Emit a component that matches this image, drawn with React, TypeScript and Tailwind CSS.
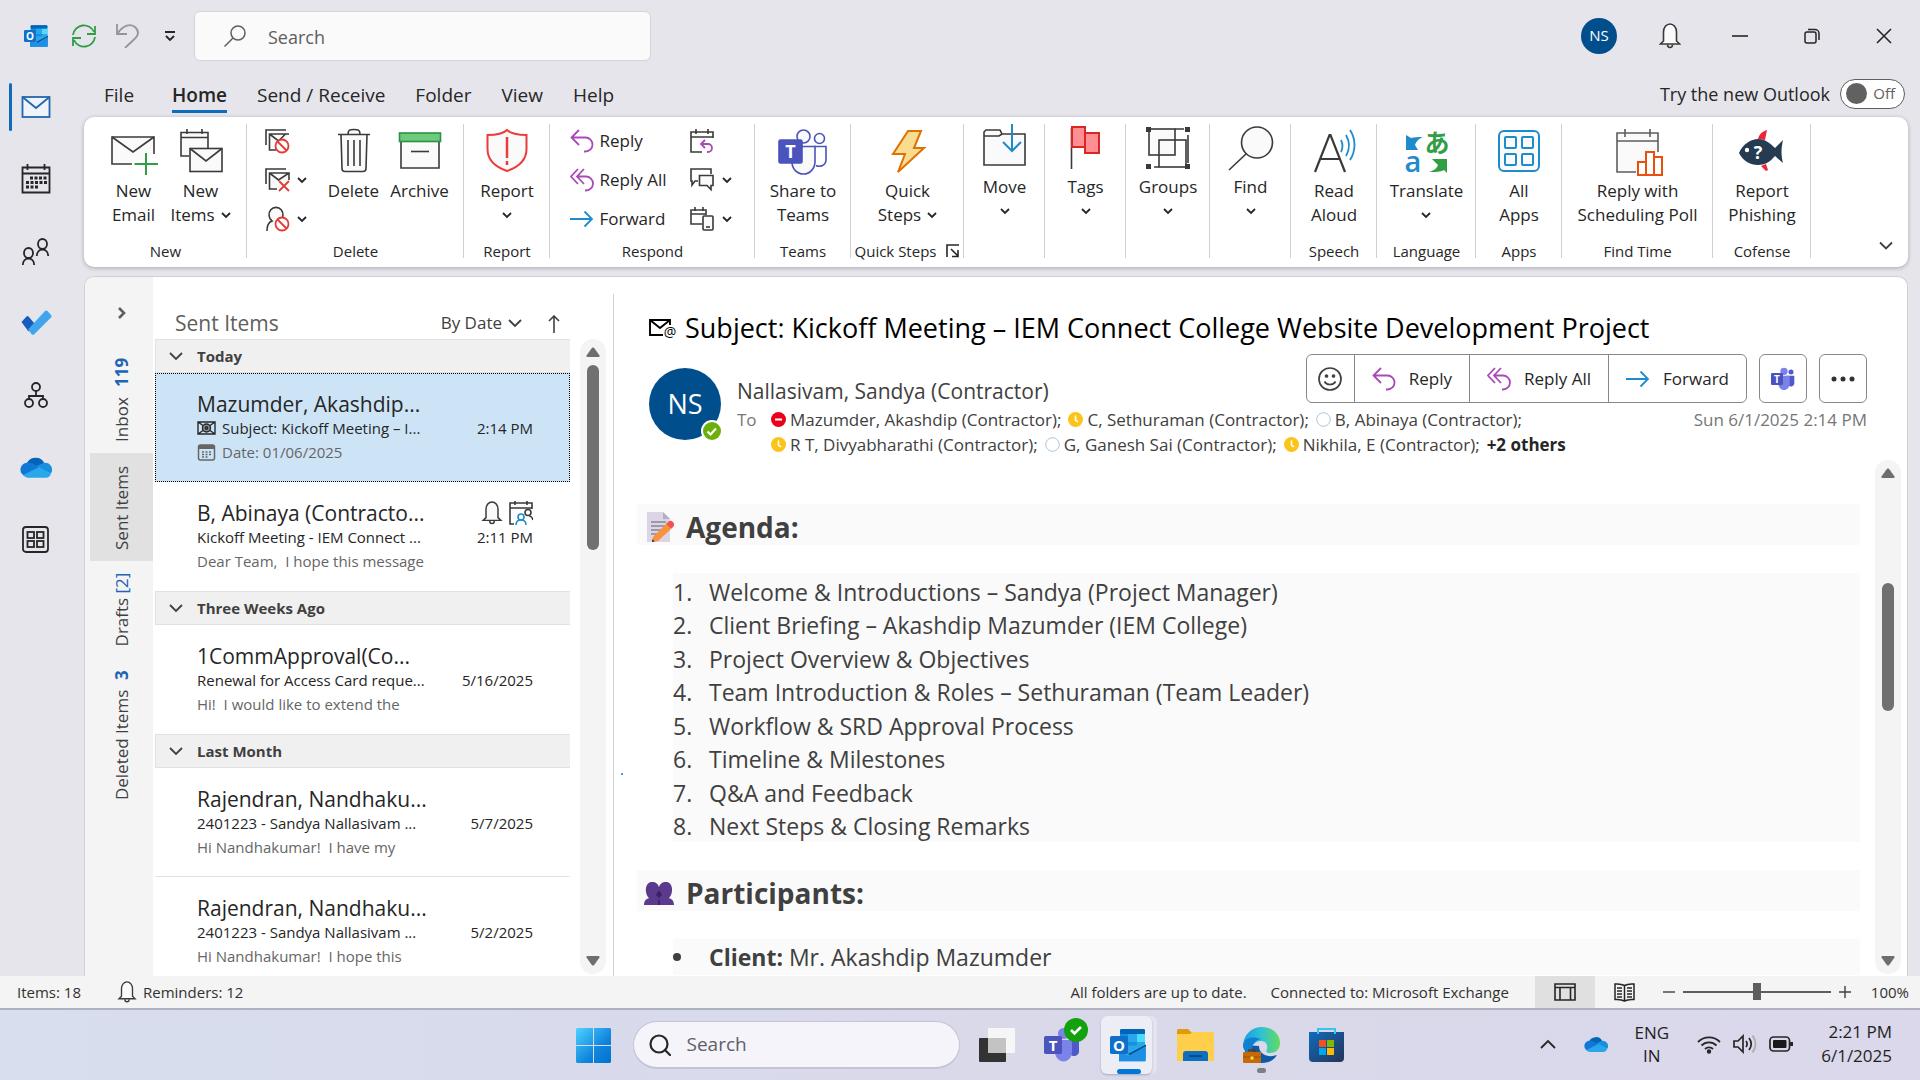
import type { ReactNode } from "react";

const INK = "#3b3a39";

/* ---------- small glyphs ---------- */

function Caret() {
  return (
    <svg className="h-2 w-2.5 shrink-0" viewBox="0 0 10 8" fill="none" stroke="#262626" strokeWidth="1.8">
      <path d="M1 2l4 4 4-4" />
    </svg>
  );
}

function Down({ className }: { className: string }) {
  return (
    <svg className={className} viewBox="0 0 14 9" fill="none" stroke="#404040" strokeWidth="1.8">
      <path d="M1 1l6 6 6-6" />
    </svg>
  );
}

function OutlookLogo({ className }: { className: string }) {
  return (
    <svg className={className} viewBox="0 0 36 34">
      <rect x="10" y="1" width="25" height="20" rx="1.5" fill="#1490df" />
      <rect x="10" y="1" width="25" height="5" rx="1.5" fill="#0364b8" />
      <rect x="18" y="6" width="9" height="8" fill="#28a8ea" />
      <rect x="27" y="6" width="8" height="8" fill="#50d9ff" />
      <rect x="27" y="14" width="8" height="7" fill="#28a8ea" />
      <path d="M9 18l27-1v15a1.500 1.500 0 0 1-1.500 1.500H9z" fill="#28a8ea" />
      <path d="M36 17L18 28l-9-6v11h26z" fill="#1f8fe6" />
      <path d="M36 16.500V18L20 27l-2-1z" fill="#0a4a8a" />
      <rect x="0" y="8" width="18" height="18" rx="1.800" fill="#0f6fcb" />
      <text x="9" y="22.500" textAnchor="middle" fontSize="15" fontWeight="700" fill="#fff">O</text>
    </svg>
  );
}

function TeamsLogo({ className }: { className: string }) {
  return (
    <svg className={className} viewBox="0 0 36 34">
      <circle cx="30" cy="6.500" r="3.800" fill="#5059c9" />
      <path d="M23 12h12v12a5 5 0 0 1-8 3z" fill="#5059c9" />
      <circle cx="19.500" cy="5.500" r="5.500" fill="#7b83eb" />
      <path d="M11 12h17v12c0 5-4 9.500-8.500 9.500S11 29 11 24z" fill="#7b83eb" />
      <rect x="0" y="8" width="18" height="18" rx="1.800" fill="#4b53bc" />
      <text x="9" y="22.500" textAnchor="middle" fontSize="15" fontWeight="700" fill="#fff">T</text>
    </svg>
  );
}

function CloudLogo({ className }: { className: string }) {
  return (
    <svg className={className} viewBox="0 0 30 20">
      <path d="M6 8a9 9 0 0 1 17-1L14 14z" fill="#0364b8" />
      <path d="M8 6a8 8 0 0 1 6 2l5 4-13 7A6.500 6.500 0 0 1 8 6z" fill="#0f78d4" />
      <path d="M15 9l8-3a6.500 6.500 0 0 1 6 10l-10-4z" fill="#1490df" />
      <path d="M3 17.500L18 10l11 6a5 5 0 0 1-4 4H7a6 6 0 0 1-4-2.500z" fill="#28a8ea" />
    </svg>
  );
}

function Bell({ className }: { className: string }) {
  return (
    <svg className={className} viewBox="0 0 22 26" fill="none" stroke={INK} strokeWidth="1.600">
      <path d="M4.500 18V9a6.500 8 0 0 1 13 0v9l3 3H1.500z" fill="#fafafa" />
      <path d="M8.500 21.500a2.500 3 0 0 0 5 0" />
    </svg>
  );
}

function ReplyIcon() {
  return (
    <svg className="h-6 w-6 shrink-0" viewBox="0 0 24 24" fill="none" stroke="#a94bb7" strokeWidth="1.800">
      <path d="M9 1L1.500 8.500 9 16M2 8.500h13.500a7 7 0 0 1 0 14H14" />
    </svg>
  );
}

function ReplyAllIcon() {
  return (
    <svg className="h-6 w-6 shrink-0" viewBox="0 0 24 24" fill="none" stroke="#a94bb7" strokeWidth="1.800">
      <path d="M8 1L1 8.500 8 16M14 1L7 8.500 14 16M8 8.500h8a7 7 0 0 1 0 14h-1" />
    </svg>
  );
}

function ForwardIcon() {
  return (
    <svg className="h-6 w-6 shrink-0" viewBox="0 0 24 24" fill="none" stroke="#1e8bcd" strokeWidth="1.800">
      <path d="M0 12h22M14.500 4.500L22 12l-7.500 7.500" />
    </svg>
  );
}

function Person({ x, y }: { x: number; y: number }) {
  return (
    <g transform={`translate(${x} ${y})`}>
      <ellipse cx="6.500" cy="6" rx="4.500" ry="5" />
      <path d="M.8 18c0-4 2.500-6.500 5.700-6.500s5.700 2.500 5.700 6.500" />
    </g>
  );
}

/* ---------- ribbon pictures ---------- */

function Pic({ children }: { children: ReactNode }) {
  return (
    <svg className="h-[46px] w-12 overflow-visible" viewBox="0 0 48 46" fill="none" stroke={INK} strokeWidth="1.600">
      {children}
    </svg>
  );
}

function MiniPic({ children }: { children: ReactNode }) {
  return (
    <svg className="h-6 w-6 shrink-0 overflow-visible" viewBox="0 0 24 24" fill="none" stroke={INK} strokeWidth="1.600">
      {children}
    </svg>
  );
}

const pics = {
  newEmail: (
    <Pic>
      <path d="M44 25V8H2v27h20" fill="#fafafa" />
      <path d="M2 8l21 15L44 8" />
      <path d="M36 24v22M24.500 35H48" stroke="#2f9e44" strokeWidth="2" />
    </Pic>
  ),
  newItems: (
    <Pic>
      <path d="M12 27H4V3.500h27V19" fill="#fafafa" />
      <path d="M4 8.500h27M10 0v5M25 0v5" />
      <rect x="13" y="19.500" width="32" height="23" fill="#fafafa" />
      <path d="M13 19.500L29 32l16-12.500" />
    </Pic>
  ),
  bin: (
    <Pic>
      <path d="M8 5.500h32M18 5.500c0-5 2-5 6-5s6 0 6 5M11 5.500l1 34a3 3 0 0 0 3 3h18a3 3 0 0 0 3-3l1-34" fill="#fafafa" />
      <path d="M18 11v26M24 11v26M30 11v26" />
    </Pic>
  ),
  archive: (
    <Pic>
      <path d="M5 12v27h38V12" fill="#fafafa" />
      <rect x="3.500" y="4" width="41" height="8.500" fill="#6ccb7c" stroke="#2f8f43" />
      <path d="M15 22.500h18" />
    </Pic>
  ),
  report: (
    <Pic>
      <path d="M24 1c4 4 10 5 19.500 5v14c0 12-8 18-19.500 22C12.500 38 4.500 32 4.500 20V6C14 6 20 5 24 1z" fill="#fafafa" stroke="#ee3a3a" strokeWidth="2" />
      <path d="M24 8v21M24 32v4" stroke="#ee3a3a" strokeWidth="2.500" />
    </Pic>
  ),
  teams: (
    <Pic>
      <g stroke="#4b53bc">
        <circle cx="24.500" cy="7.500" r="6.500" fill="#fafafa" />
        <circle cx="40.500" cy="9.500" r="5" />
        <path d="M35 17.500h12v13c0 6-6 8-10 6" />
        <path d="M13 17.500h23v15c0 7-5 12.500-11.500 12.500S13 40 13 33z" fill="#fafafa" />
        <rect x="0" y="11" width="23" height="23" rx="1.500" fill="#4b53bc" />
      </g>
      <text x="11.500" y="29" textAnchor="middle" fontSize="18" fontWeight="700" fill="#fff" stroke="none">T</text>
    </Pic>
  ),
  bolt: (
    <Pic>
      <path d="M24 2h13l-7 17h10L14 43l7-18H9z" fill="#f9dc8f" stroke="#e07000" strokeWidth="2" />
    </Pic>
  ),
  move: (
    <Pic>
      <path d="M3 40V7l2-2h14l2 4h23v31z" fill="#fafafa" />
      <path d="M3 11h15l3-2" />
      <path d="M31 -1v27M22 17l9 9 9-9" stroke="#1e8bcd" strokeWidth="2" />
    </Pic>
  ),
  tags: (
    <Pic>
      <path d="M9.500 3v41" />
      <path d="M23 8h14v20H23z" fill="#ff8f92" stroke="#dc2626" strokeWidth="2" />
      <path d="M10 2h13v20H10z" fill="#ff8f92" stroke="#dc2626" strokeWidth="2" />
    </Pic>
  ),
  groups: (
    <Pic>
      <rect x="5" y="4" width="26" height="26" fill="#fafafa" />
      <rect x="15" y="15" width="27" height="27" />
      <path d="M31 4h9M44 10v28M10 42h5" />
      <g fill={INK} stroke="none">
        <rect x="2" y="2" width="5" height="5" />
        <rect x="41" y="2" width="5" height="5" />
        <rect x="2" y="39" width="5" height="5" />
        <rect x="41" y="39" width="5" height="5" />
      </g>
    </Pic>
  ),
  find: (
    <Pic>
      <circle cx="30" cy="17.500" r="15.500" fill="#fafafa" />
      <path d="M19.500 28.500L2 45" />
    </Pic>
  ),
  readAloud: (
    <Pic>
      <path d="M5 43L19.500 6h1L35 43M10.500 30h19" strokeWidth="2.200" />
      <g stroke="#1e8bcd" strokeWidth="1.800">
        <path d="M31 11c2 4 2 8 0 12" />
        <path d="M36 6c4 7 4 14 0 21" />
        <path d="M40 1c6 9 6 21 0 30" />
      </g>
    </Pic>
  ),
  translate: (
    <Pic>
      <path d="M4 6l5 3c3-1 7-1 12-1-5 2-7 5-8 8l3 5H4z" fill="#1e8bcd" stroke="none" />
      <path d="M45 44l-3-3c-4 2-8 2-15 2 6-2 8-4 9-7l-6-6h15z" fill="#2f9e44" stroke="none" />
      <g stroke="none">
        <text x="11" y="43" textAnchor="middle" fontSize="29" fontWeight="600" fill="#1e8bcd">a</text>
        <text x="35" y="23" textAnchor="middle" fontSize="25" fontWeight="700" fill="#2f9e44" fontFamily='"Noto Sans CJK JP", sans-serif'>あ</text>
      </g>
    </Pic>
  ),
  apps: (
    <Pic>
      <g stroke="#1e8bcd" strokeWidth="2">
        <rect x="4" y="2" width="40" height="40" rx="5" fill="#fafafa" />
        <rect x="10" y="8" width="11" height="11" rx="1" />
        <rect x="27" y="8" width="11" height="11" rx="1" />
        <rect x="10" y="25" width="11" height="11" rx="1" />
        <rect x="27" y="25" width="11" height="11" rx="1" />
      </g>
    </Pic>
  ),
  poll: (
    <Pic>
      <path d="M22 43H3V4h41v19" fill="#fafafa" stroke="#605e5c" />
      <path d="M3 12h41M11 0v8M36 0v8" stroke="#605e5c" />
      <path d="M24 46V33h8v13M32 46V23h8v23M40 28h8v18H23" fill="#fff" stroke="#e8500e" strokeWidth="2" />
    </Pic>
  ),
  phish: (
    <Pic>
      <path d="M20 10c1-5 5-8 9-9l-2 10zM23 37l5 5 2-1-2-6z" fill="#ee2536" stroke="none" />
      <path d="M1 24C5 15 13 10 20 10c7 0 12 4 17 9l8-8c-2 9-2 15 0 23l-8-7c-5 6-10 9-17 9-8 0-15-4-19-12z" fill="#243b52" stroke="none" />
      <circle cx="9" cy="21" r="2.200" fill="#fff" stroke="none" />
      <text x="20" y="30" textAnchor="middle" fontSize="18" fontWeight="700" fill="#fff" stroke="none">?</text>
    </Pic>
  ),
};

const NoEntry = () => (
  <g stroke="#e53935" strokeWidth="1.800">
    <circle cx="17" cy="17" r="6.500" fill="#fff" />
    <path d="M12.500 12.500l9 9" />
  </g>
);

/* ---------- ribbon ---------- */

type GroupProps = { width: string; label?: string; launcher?: boolean; children: ReactNode };

function Group({ width, label, launcher, children }: GroupProps) {
  return (
    <section className={`relative flex h-full shrink-0 flex-col ${width}`}>
      <div className={`flex flex-1 justify-center ${label ? "pt-3" : "pt-2"}`}>{children}</div>
      {label && (
        <div className="mb-1 flex h-6 items-center justify-center gap-2.5 text-[15px] leading-6">
          {label}
          {launcher && (
            <button aria-label="Quick Steps settings">
              <svg className="h-3.5 w-3.5" viewBox="0 0 14 14" fill="none" stroke="#262626" strokeWidth="1.600">
                <path d="M1 13V1h12M5 5l7 7M12 6v6.500H6" />
              </svg>
            </button>
          )}
        </div>
      )}
      <span className="absolute right-0 top-[7px] h-[134px] w-px bg-[#d2d0ce]" />
    </section>
  );
}

function Big({ pic, lines, caret, width = "" }: { pic: ReactNode; lines: string[]; caret?: "inline" | "below"; width?: string }) {
  return (
    <button className={`flex flex-col items-center gap-1 self-start text-[17px] leading-6 whitespace-nowrap ${width}`}>
      {pic}
      <span className="flex flex-col items-center">
        {lines.map((l, i) => (
          <span key={l} className="flex items-center gap-1.5">
            {l}
            {caret === "inline" && i === lines.length - 1 && <Caret />}
          </span>
        ))}
        {caret === "below" && (
          <span className="flex h-6 items-center">
            <Caret />
          </span>
        )}
      </span>
    </button>
  );
}

function Mini({ icon, label, caret, name }: { icon: ReactNode; label?: string; caret?: boolean; name?: string }) {
  return (
    <button aria-label={name} className="flex h-[39px] items-center gap-1.5 text-[17px] leading-6 whitespace-nowrap">
      {icon}
      {label}
      {caret && <span className="ml-0.5"><Caret /></span>}
    </button>
  );
}

function Ribbon() {
  return (
    <div className="mr-3 flex h-[150px] items-stretch rounded-[10px] bg-white text-[#262626] shadow-[0_1px_4px_rgba(0,0,0,0.28)]">
      <Group width="w-[163px]" label="New">
        <div className="ml-1 flex">
          <Big pic={pics.newEmail} lines={["New", "Email"]} width="w-[66px]" />
          <Big pic={pics.newItems} lines={["New", "Items"]} caret="inline" width="w-[68px]" />
        </div>
      </Group>
      <Group width="w-[217px]" label="Delete">
        <div className="-mt-2 ml-1.5 flex w-[56px] flex-col">
          <Mini name="Ignore" icon={<MiniPic><path d="M1 16V1h20" /><path d="M11 21H4.500V5H24M4.500 5l9 7 7-7" fill="#fafafa" /><NoEntry /></MiniPic>} />
          <Mini name="Clean Up" caret icon={<MiniPic><path d="M1 16V1h20" /><path d="M12 21H4.500V5H24v7M4.500 5l9 7L24 5" fill="#fafafa" /><path d="M14 13l10 10M24 13L14 23" stroke="#e53935" strokeWidth="1.800" /></MiniPic>} />
          <Mini name="Junk" caret icon={<MiniPic><path d="M2 24c0-6 2-9 5-10a7 7.500 0 1 1 8 0" fill="#fafafa" /><NoEntry /></MiniPic>} />
        </div>
        <Big pic={pics.bin} lines={["Delete"]} width="w-[66px]" />
        <Big pic={pics.archive} lines={["Archive"]} width="w-[66px]" />
      </Group>
      <Group width="w-[86px]" label="Report">
        <Big pic={pics.report} lines={["Report"]} caret="below" />
      </Group>
      <Group width="w-[205px]" label="Respond">
        <div className="-mt-2 flex w-[120px] flex-col">
          <Mini icon={<ReplyIcon />} label="Reply" />
          <Mini icon={<ReplyAllIcon />} label="Reply All" />
          <Mini icon={<ForwardIcon />} label="Forward" />
        </div>
        <div className="-mt-2 mr-1 flex flex-col">
          <Mini name="Meeting" icon={<MiniPic><path d="M12 23H1V3h22v6M1 8h22M6 0v5M18 0v5" /><path d="M15 11l-4 4 4 4M11 15h7a4 4 0 0 1 0 8h-1" stroke="#a94bb7" strokeWidth="1.800" /></MiniPic>} />
          <Mini name="Chat" caret icon={<MiniPic><path d="M8 13H5l-3 4v-4H1V1h20v5" /><path d="M9.500 7.500H23v10h-2v4l-4-4H9.500z" fill="#fafafa" /></MiniPic>} />
          <Mini name="More" caret icon={<MiniPic><path d="M12 17H1V3h15v5M1 7h15M5 0v4M13 0v4" /><rect x="13" y="9" width="10" height="14" rx="1" fill="#fafafa" /><path d="M16 20h4" /></MiniPic>} />
        </div>
      </Group>
      <Group width="w-24" label="Teams">
        <Big pic={pics.teams} lines={["Share to", "Teams"]} />
      </Group>
      <Group width="w-[113px]" label="Quick Steps" launcher>
        <Big pic={pics.bolt} lines={["Quick", "Steps"]} caret="inline" />
      </Group>
      <Group width="w-[81px]"><Big pic={pics.move} lines={["Move"]} caret="below" /></Group>
      <Group width="w-[81px]"><Big pic={pics.tags} lines={["Tags"]} caret="below" /></Group>
      <Group width="w-[84px]"><Big pic={pics.groups} lines={["Groups"]} caret="below" /></Group>
      <Group width="w-[81px]"><Big pic={pics.find} lines={["Find"]} caret="below" /></Group>
      <Group width="w-[86px]" label="Speech"><Big pic={pics.readAloud} lines={["Read", "Aloud"]} /></Group>
      <Group width="w-[99px]" label="Language"><Big pic={pics.translate} lines={["Translate"]} caret="below" /></Group>
      <Group width="w-[86px]" label="Apps"><Big pic={pics.apps} lines={["All", "Apps"]} /></Group>
      <Group width="w-[151px]" label="Find Time"><Big pic={pics.poll} lines={["Reply with", "Scheduling Poll"]} /></Group>
      <Group width="w-[98px]" label="Cofense"><Big pic={pics.phish} lines={["Report", "Phishing"]} /></Group>
      <button aria-label="Ribbon display options" className="mb-4 ml-auto mr-[15px] self-end">
        <Down className="h-2.5 w-3.5" />
      </button>
    </div>
  );
}

/* ---------- window chrome ---------- */

function TitleBar() {
  return (
    <header className="flex h-[71px] shrink-0 items-center pl-6">
      <OutlookLogo className="h-6 w-6" />
      <button aria-label="Send and receive all" className="ml-6">
        <svg className="h-6 w-6" viewBox="0 0 24 24" fill="none" stroke="#2f9e44" strokeWidth="1.800">
          <path d="M1 11a11 11 0 0 1 21-3M23 2v8h-8M23 13a11 11 0 0 1-21 3M1 22v-8h8" />
        </svg>
      </button>
      <button aria-label="Undo" className="ml-5">
        <svg className="h-6 w-6" viewBox="0 0 24 24" fill="none" stroke="#949499" strokeWidth="1.800">
          <path d="M1 0v10h10M1.500 9.500C7 1 15-1 19.500 3.500s2 9-1 11.500L9 24" />
        </svg>
      </button>
      <button aria-label="Customize quick access toolbar" className="ml-6">
        <svg className="h-3 w-3" viewBox="0 0 12 12" fill="none" stroke="#262626" strokeWidth="1.800">
          <path d="M1 2h10M2 6l4 4 4-4" />
        </svg>
      </button>
      <label className="ml-[18px] flex h-[50px] w-[457px] items-center gap-[22px] rounded-md border border-[#d4d4d8] bg-[#fafafa] pl-[29px]">
        <svg className="h-[22px] w-[22px] shrink-0" viewBox="0 0 22 22" fill="none" stroke="#605e5c" strokeWidth="1.500">
          <circle cx="14" cy="8" r="7" />
          <path d="M9 13l-8.500 8.500" />
        </svg>
        <input aria-label="Search" placeholder="Search" className="w-full bg-transparent pt-0.5 text-lg outline-none placeholder:text-[#605e5c]" />
      </label>
      <div className="ml-auto flex items-center">
        <button aria-label="Account" className="mr-[42px] flex h-9 w-9 items-center justify-center rounded-full bg-[#004e8c] text-[15px] text-white">NS</button>
        <button aria-label="Notifications" className="mr-[23px]"><Bell className="h-[26px] w-[22px]" /></button>
        <button aria-label="Minimize" className="flex w-[72px] justify-center">
          <svg className="h-4 w-4" viewBox="0 0 16 16" stroke="#262626" strokeWidth="1.600"><path d="M0 8h16" /></svg>
        </button>
        <button aria-label="Restore" className="flex w-[72px] justify-center">
          <svg className="h-4 w-4" viewBox="0 0 16 16" fill="none" stroke="#262626" strokeWidth="1.500">
            <rect x="1" y="4" width="11" height="11" rx="2" />
            <path d="M4 1.500h7a4 4 0 0 1 4 4V12" />
          </svg>
        </button>
        <button aria-label="Close" className="flex w-[72px] justify-center">
          <svg className="h-4 w-4" viewBox="0 0 16 16" stroke="#262626" strokeWidth="1.600"><path d="M1 1l14 14M15 1L1 15" /></svg>
        </button>
      </div>
    </header>
  );
}

function AppRail() {
  const svg = (children: ReactNode, stroke = "#262626") => (
    <svg className="h-8 w-[30px]" viewBox="0 0 30 32" fill="none" stroke={stroke} strokeWidth="1.800">{children}</svg>
  );
  const entries: [string, ReactNode][] = [
    ["Mail", svg(<><rect x="1.500" y="6" width="27" height="20" fill="#f0f4fa" /><path d="M1.500 6L15 17 28.500 6" /></>, "#2166ae")],
    ["Calendar", svg(<>
      <path d="M1.500 4.500h27v25h-27zM1.500 10.500h27M6.500 1v6M23.500 1v6" />
      <path d="M9 15h17M5 19.500h21M5 24h12" strokeWidth="3" strokeDasharray="3 1.500" />
    </>)],
    ["People", svg(<><Person x={1} y={12} /><Person x={15} y={3} /></>)],
    ["To Do", <svg className="h-7 w-8" viewBox="0 0 32 28">
      <path d="M1.500 13l5-5.500a1.500 1.500 0 0 1 2 0l6 7-6 8z" fill="#185abd" />
      <path d="M8 20.500L25 2a1.800 1.800 0 0 1 2.500 0l3.500 4a1.800 1.800 0 0 1 0 2.500L14.500 25a2 2 0 0 1-3 0z" fill="#41a5ee" />
    </svg>],
    ["Org Explorer", svg(<><circle cx="15" cy="8" r="4" /><circle cx="8" cy="24" r="4" /><circle cx="22" cy="24" r="4" /><path d="M15 12v4M8 20v-3h14v3" /></>)],
    ["OneDrive", <CloudLogo className="h-6 w-8" />],
    ["More apps", svg(<>
      <rect x="2" y="4" width="25" height="25" rx="3" />
      <rect x="6.500" y="9" width="6.500" height="6" /><rect x="16" y="9" width="6.500" height="6" />
      <rect x="6.500" y="18" width="6.500" height="6" /><rect x="16" y="18" width="6.500" height="6" />
    </>)],
  ];
  return (
    <nav className="flex w-[84px] shrink-0 flex-col">
      {entries.map(([name, icon], i) => (
        <button key={name} aria-label={name} className="flex h-[72px] w-full shrink-0 items-center pl-[9px]">
          <span className={`h-12 w-[3px] rounded ${i === 0 ? "bg-[#0f6cbd]" : "bg-transparent"}`} />
          <span className="ml-2 flex w-8 justify-center">{icon}</span>
        </button>
      ))}
    </nav>
  );
}

function Tabs() {
  const tabs = ["Home", "Send / Receive", "Folder", "View", "Help"];
  return (
    <div className="flex h-[46px] shrink-0 items-center pl-5 pr-[15px] pt-[5px] text-[19px] text-[#262626]">
      <button className="border-b-[3px] border-transparent leading-[30px]">File</button>
      <div className="ml-[38px] flex gap-[30px]">
        {tabs.map((t) => (
          <button key={t} className={`border-b-[3px] leading-[30px] ${t === "Home" ? "border-[#0f6cbd] font-semibold" : "border-transparent"}`}>{t}</button>
        ))}
      </div>
      <label className="relative -mt-1.5 ml-auto flex items-center gap-2.5 text-lg">
        Try the new Outlook
        <input type="checkbox" role="switch" className="h-[30px] w-[65px] appearance-none rounded-full border border-[#605e5c] bg-white" />
        <span className="pointer-events-none absolute right-[38px] h-[21px] w-[21px] rounded-full bg-[#616161]" />
        <span className="pointer-events-none absolute right-2.5 text-[15px] text-[#616161]">Off</span>
      </label>
    </div>
  );
}

/* ---------- folder strip and message list ---------- */

function FolderStrip() {
  const folders = [
    { name: "Inbox", count: "119", bold: true, h: "h-[108px]" },
    { name: "Sent Items", h: "h-[108px] bg-[#e1e1e1]" },
    { name: "Drafts", count: "[2]", h: "h-24" },
    { name: "Deleted Items", count: "3", bold: true, h: "h-[154px]" },
  ];
  return (
    <nav className="flex w-[68px] shrink-0 flex-col bg-[#f4f4f4] pl-[5px]">
      <button aria-label="Expand folder pane" className="flex h-[68px] items-end justify-center pb-[26px]">
        <svg className="h-3 w-2.5" viewBox="0 0 10 12" fill="none" stroke="#605e5c" strokeWidth="2.600"><path d="M2 1l5 5-5 5" /></svg>
      </button>
      {folders.map((f) => (
        <button key={f.name} className={`flex w-full items-center justify-center pt-0.5 ${f.h}`}>
          <span className={`flex rotate-180 text-[17px] leading-6 whitespace-nowrap text-[#404040] [writing-mode:vertical-rl] ${f.bold ? "gap-2.5" : "gap-1"}`}>
            {f.name}
            {f.count && <span className={f.bold ? "font-bold text-[#2065b5]" : "text-[#2065b5]"}>{f.count}</span>}
          </span>
        </button>
      ))}
    </nav>
  );
}

type Msg = { from: string; subject: string; preview: string; when: string; selected?: boolean; meeting?: boolean; rule?: boolean };

const sections: { title: string; messages: Msg[] }[] = [
  {
    title: "Today",
    messages: [
      { from: "Mazumder, Akashdip...", subject: "Subject: Kickoff Meeting – I...", preview: "Date: 01/06/2025", when: "2:14 PM", selected: true },
      { from: "B, Abinaya (Contracto...", subject: "Kickoff Meeting - IEM Connect ...", preview: "Dear Team,  I hope this message", when: "2:11 PM", meeting: true },
    ],
  },
  {
    title: "Three Weeks Ago",
    messages: [{ from: "1CommApproval(Co...", subject: "Renewal for Access Card reque...", preview: "Hi!  I would like to extend the", when: "5/16/2025" }],
  },
  {
    title: "Last Month",
    messages: [
      { from: "Rajendran, Nandhaku...", subject: "2401223 - Sandya Nallasivam ...", preview: "Hi Nandhakumar!  I have my", when: "5/7/2025", rule: true },
      { from: "Rajendran, Nandhaku...", subject: "2401223 - Sandya Nallasivam ...", preview: "Hi Nandhakumar!  I hope this", when: "5/2/2025" },
    ],
  },
];

function Message({ m }: { m: Msg }) {
  return (
    <li
      className={`flex h-[109px] shrink-0 flex-col border pl-[41px] pr-9 pt-[18px] text-[15px] leading-6 whitespace-pre text-[#262626] ${
        m.selected ? "border-dotted border-black bg-[#cde4f7]" : m.rule ? "border-transparent border-b-[#e1e1e1]" : "border-transparent"
      }`}
    >
      <div className="flex items-center justify-between text-[21px]">
        {m.from}
        {m.meeting && (
          <span className="flex gap-1.5">
            <Bell className="h-6 w-[22px]" />
            <svg className="h-6 w-6" viewBox="0 0 24 24" fill="none" stroke={INK} strokeWidth="1.600">
              <path d="M5 23H1V2h22v6M1 7h22M6 0v4M18 0v4" />
              <circle cx="19" cy="11.500" r="3" /><path d="M20 15c2 0 3.500 2 4 4" />
              <circle cx="12" cy="16" r="3" stroke="#1e8bcd" /><path d="M7 24c0-3 2-5 5-5s5 2 5 5" stroke="#1e8bcd" />
            </svg>
          </span>
        )}
      </div>
      <div className="flex items-center justify-between">
        <span className="flex items-center gap-1.5">
          {m.selected && (
            <svg className="h-4 w-[19px]" viewBox="0 0 19 16" fill="none" stroke="#262626" strokeWidth="1.400">
              <path d="M1 2h17v12H1zM1 2l17 12M18 2L1 14" />
              <circle cx="9.500" cy="8" r="4" fill="#8a9299" /><circle cx="9.500" cy="8" r="1.200" />
            </svg>
          )}
          {m.subject}
        </span>
        {m.when}
      </div>
      <div className="flex items-center gap-1.5 text-[#666666]">
        {m.selected && (
          <svg className="h-[17px] w-[19px]" viewBox="0 0 19 17" fill="none" stroke="#666" strokeWidth="1.500">
            <rect x="1.500" y="1" width="16" height="15" rx="2" />
            <path d="M1.500 3h16" strokeWidth="4" />
            <path d="M5 8h9M5 10.500h9M5 13h6" strokeDasharray="2 1.500" />
          </svg>
        )}
        {m.preview}
      </div>
    </li>
  );
}

function Scrollbar({ thumb }: { thumb: string }) {
  return (
    <div className="flex w-[26px] shrink-0 flex-col items-center rounded-full bg-[#f4f4f4] py-2">
      <svg className="h-2.5 w-3.5" viewBox="0 0 14 10"><path d="M6 .8L.5 8.500Q0 10 1.500 10h11Q14 10 13.500 8.500L8 .8Q7 0 6 .8z" fill="#6e6e6e" /></svg>
      <div className={`w-3 rounded-full bg-[#707070] ${thumb}`} />
      <svg className="mt-auto h-2.5 w-3.5" viewBox="0 0 14 10"><path d="M6 9.200L.5 1.500Q0 0 1.500 0h11Q14 0 13.500 1.500L8 9.200Q7 10 6 9.200z" fill="#6e6e6e" /></svg>
    </div>
  );
}

function MessageList() {
  return (
    <section className="mt-[17px] flex w-[461px] shrink-0 flex-col border-r border-[#d2d0ce]">
      <div className="flex h-[45px] shrink-0 items-end pb-0.5 pl-[22px] pr-[53px] text-[#404040]">
        <h2 className="text-[21px] leading-7 text-[#605e5c]">Sent Items</h2>
        <button className="ml-auto flex items-center gap-1.5 text-[17px] leading-7">By Date <Down className="h-[9px] w-3.5" /></button>
        <button aria-label="Sort order" className="ml-[26px] pb-1">
          <svg className="h-[18px] w-3" viewBox="0 0 12 18" fill="none" stroke="#404040" strokeWidth="1.600"><path d="M6 18V1M1 6l5-5 5 5" /></svg>
        </button>
      </div>
      <div className="flex min-h-0 flex-1">
        <div className="ml-0.5 mr-2.5 flex min-w-0 flex-1 flex-col overflow-hidden">
          {sections.map((s) => (
            <div key={s.title} className="flex shrink-0 flex-col">
              <button className="flex h-[34px] items-center gap-3.5 border-y border-l border-[#e1e1e1] bg-[#f0f0f0] pl-[13px] text-[15px] font-bold text-[#404040]">
                <Down className="h-[9px] w-3.5" />
                {s.title}
              </button>
              <ul className="flex flex-col">{s.messages.map((m, i) => <Message key={i} m={m} />)}</ul>
            </div>
          ))}
        </div>
        <div className="mb-0.5 mr-[7px] flex"><Scrollbar thumb="mt-2 h-[185px]" /></div>
      </div>
    </section>
  );
}

/* ---------- reading pane ---------- */

type Status = "busy" | "away" | "unknown";

function Presence({ s }: { s: Status }) {
  return (
    <svg className="h-[15px] w-[15px] shrink-0" viewBox="0 0 15 15" fill="none">
      {s === "busy" && <><circle cx="7.500" cy="7.500" r="7.500" fill="#e8001c" /><path d="M4 7.500h7" stroke="#fff" strokeWidth="1.800" /></>}
      {s === "away" && <><circle cx="7.500" cy="7.500" r="7.500" fill="#fcc419" /><path d="M7.500 3.500V8l2.500 2" stroke="#fff" strokeWidth="1.600" /></>}
      {s === "unknown" && <circle cx="7.500" cy="7.500" r="6.800" fill="#fff" stroke="#a9c7dc" />}
    </svg>
  );
}

function Recipient({ s, name }: { s: Status; name: string }) {
  return <span className="flex items-center gap-1"><Presence s={s} />{name};</span>;
}

function MailActions() {
  return (
    <div className="flex gap-3 text-[17px] text-[#262626]">
      <div className="flex h-[49px] divide-x divide-[#8a8886] rounded-md border border-[#8a8886]">
        <button aria-label="React" className="flex w-12 items-center justify-center">
          <svg className="h-6 w-6" viewBox="0 0 24 24" fill="none" stroke="#404040" strokeWidth="1.700">
            <circle cx="12" cy="12" r="11" /><path d="M6.500 14.500c2 4 9 4 11 0" />
            <circle cx="8.500" cy="9" r="1" fill="#404040" /><circle cx="15.500" cy="9" r="1" fill="#404040" />
          </svg>
        </button>
        <button className="flex items-center gap-[13px] px-[17px]"><ReplyIcon />Reply</button>
        <button className="flex items-center gap-[13px] px-[17px]"><ReplyAllIcon />Reply All</button>
        <button className="flex items-center gap-[13px] px-[17px]"><ForwardIcon />Forward</button>
      </div>
      <button aria-label="Share to Teams" className="flex w-12 items-center justify-center rounded-md border border-[#8a8886]"><TeamsLogo className="h-6 w-6" /></button>
      <button aria-label="More actions" className="flex w-12 items-center justify-center rounded-md border border-[#8a8886]">
        <svg className="h-1.5 w-6" viewBox="0 0 24 6" fill="#323130"><circle cx="3" cy="3" r="2.500" /><circle cx="12" cy="3" r="2.500" /><circle cx="21" cy="3" r="2.500" /></svg>
      </button>
    </div>
  );
}

function ReadingPane() {
  const agenda = [
    "Welcome & Introductions – Sandya (Project Manager)",
    "Client Briefing – Akashdip Mazumder (IEM College)",
    "Project Overview & Objectives",
    "Team Introduction & Roles – Sethuraman (Team Leader)",
    "Workflow & SRD Approval Process",
    "Timeline & Milestones",
    "Q&A and Feedback",
    "Next Steps & Closing Remarks",
  ];
  return (
    <article className="relative flex min-w-0 flex-1 flex-col">
      <span className="absolute left-[7px] top-[496px] h-0.5 w-0.5 bg-[#4aa3e0]" />
      <div className="flex items-start gap-4 pb-[3px] pl-[35px] pr-10 pt-[31px]">
        <div className="min-w-0 flex-1">
          <h1 className="flex h-10 items-center gap-2 text-[27px] text-black whitespace-nowrap">
            <svg className="h-6 w-7 overflow-visible" viewBox="0 0 28 24" fill="none" stroke="#000" strokeWidth="1.900">
              <path d="M21 9V4H1v15h13M1 4l10 8 10-8" />
              <text x="21" y="21" textAnchor="middle" fontSize="14" fill="#000" stroke="none">@</text>
            </svg>
            Subject: Kickoff Meeting – IEM Connect College Website Development Project
          </h1>
          <div className="flex">
            <div className="relative mt-5 flex h-[72px] w-[72px] shrink-0 items-center justify-center rounded-full bg-[#004e8c] text-[27px] text-white">
              NS
              <svg className="absolute -bottom-0.5 -right-0.5 h-[22px] w-[22px]" viewBox="0 0 22 22" fill="none">
                <circle cx="11" cy="11" r="11" fill="#fff" /><circle cx="11" cy="11" r="9" fill="#6bb00a" />
                <path d="M6.500 11.500l3 3 5.500-6" stroke="#fff" strokeWidth="2.200" />
              </svg>
            </div>
            <div className="ml-4 min-w-0 flex-1 text-[#404040]">
              <div className="mt-1.5 flex h-[53px] items-end justify-between">
                <span className="h-8 text-[21px] leading-8">Nallasivam, Sandya (Contractor)</span>
                <span className="-mb-0.5 self-start"><MailActions /></span>
              </div>
              <div className="flex text-[17px] leading-[25px] whitespace-nowrap">
                <span className="w-[34px] text-[#767676]">To</span>
                <div>
                  <div className="flex gap-[7px]">
                    <Recipient s="busy" name="Mazumder, Akashdip (Contractor)" />
                    <Recipient s="away" name="C, Sethuraman (Contractor)" />
                    <Recipient s="unknown" name="B, Abinaya (Contractor)" />
                  </div>
                  <div className="flex gap-[7px]">
                    <Recipient s="away" name="R T, Divyabharathi (Contractor)" />
                    <Recipient s="unknown" name="G, Ganesh Sai (Contractor)" />
                    <Recipient s="away" name="Nikhila, E (Contractor)" />
                    <b className="text-[#262626]">+2 others</b>
                  </div>
                </div>
                <time className="ml-auto text-[#767676]">Sun 6/1/2025 2:14 PM</time>
              </div>
            </div>
          </div>
        </div>
      </div>
      <div className="flex min-h-0 flex-1">
        <div className="min-w-0 flex-1 overflow-hidden pl-[23px] pr-[15px] pt-11 text-[23px] text-[#404040]">
          <h2 className="flex h-[41px] items-center gap-3 bg-[#fafafa] pl-[9px] pt-1 text-[28px] font-bold">
            <svg className="h-8 w-7" viewBox="0 0 28 32">
              <path d="M1 1h16l7 7v23H1z" fill="#dcd5e6" /><path d="M17 1l7 7h-7z" fill="#b5aebf" />
              <path d="M5 11h15M5 15h15M5 19h13M5 23h10" stroke="#8b8594" strokeWidth="1.400" />
              <path d="M7 26L20 13l5 5-13 12-6 1z" fill="#f8923c" /><path d="M20 13l2-2a3 3 0 0 1 5 5l-2 2z" fill="#f1544d" />
              <path d="M6 31l.5-3 2 2.500z" fill="#3f2a33" />
            </svg>
            Agenda:
          </h2>
          <ol className="ml-9 mt-7 grid h-[269px] content-between bg-[#fafafa] pt-[3px] leading-8">
            {agenda.map((t, i) => (
              <li key={t} className="flex"><span className="w-9">{i + 1}.</span>{t}</li>
            ))}
          </ol>
          <h2 className="mt-7 flex h-[41px] items-center gap-3 bg-[#fafafa] pl-[7px] pt-1 text-[28px] font-bold">
            <svg className="h-6 w-[30px]" viewBox="0 0 30 24" fill="#5b3a8e">
              <path d="M0 24c0-5 3-6 5-7-5-5-4-16 3-16 4 0 6 2 7 5 1-3 3-5 7-5 7 0 8 11 3 16 2 1 5 2 5 7z" />
              <path d="M12 14l3 3 3-3-2-4h-2zM14 24c0-3 0-5 1-6 1 1 1 3 1 6z" fill="#3c2166" />
            </svg>
            Participants:
          </h2>
          <ul className="ml-9 mt-7 bg-[#fafafa] leading-9">
            <li className="flex items-center whitespace-pre"><span className="w-9"><span className="block h-2 w-2 rounded-full bg-[#404040]" /></span><b>Client:</b> Mr. Akashdip Mazumder</li>
          </ul>
        </div>
        <div className="mb-0.5 mr-1.5 flex"><Scrollbar thumb="mt-[105px] h-[128px]" /></div>
      </div>
    </article>
  );
}

/* ---------- bottom bars ---------- */

function StatusBar() {
  return (
    <footer className="flex h-[34px] shrink-0 items-center border-b-2 border-[#aeb2bf] bg-[#f4f4f4] pl-[17px] pr-[11px] text-[15px] text-[#323130] whitespace-nowrap">
      <span>Items: 18</span>
      <button className="ml-9 flex items-center gap-1.5"><Bell className="h-[22px] w-5" />Reminders: 12</button>
      <span className="ml-auto">All folders are up to date.</span>
      <span className="ml-6">Connected to: Microsoft Exchange</span>
      <button aria-label="Normal view" className="ml-[26px] flex h-8 w-[60px] items-center justify-center bg-[#e0e0e0]">
        <svg className="h-[18px] w-[22px]" viewBox="0 0 22 18" fill="none" stroke="#262626" strokeWidth="1.600"><path d="M1 1h20v16H1zM1 4.500h20M6 4.500V17M16.500 4.500V17" /></svg>
      </button>
      <button aria-label="Reading view" className="ml-[19px]">
        <svg className="h-[19px] w-[21px]" viewBox="0 0 21 19" fill="none" stroke="#262626" strokeWidth="1.500">
          <path d="M10.500 2.500Q7 .5 1 1v15.500q6-.5 9.500 1.500 3.500-2 9.500-1.500V1q-6-.5-9.500 1.500zM10.500 2.500V18M3 5h5M3 8h5M3 11h5M3 14h5M13 5h5M13 8h5M13 11h5M13 14h5" />
        </svg>
      </button>
      <button aria-label="Zoom out" className="ml-7"><svg className="h-3 w-3" viewBox="0 0 12 12" stroke="#404040" strokeWidth="1.400"><path d="M0 6h12" /></svg></button>
      <input
        type="range"
        aria-label="Zoom"
        defaultValue={50}
        className="ml-2 h-5 w-[148px] appearance-none bg-transparent [&::-webkit-slider-runnable-track]:h-0.5 [&::-webkit-slider-runnable-track]:bg-[#605e5c] [&::-webkit-slider-thumb]:-mt-2 [&::-webkit-slider-thumb]:h-[17px] [&::-webkit-slider-thumb]:w-2 [&::-webkit-slider-thumb]:appearance-none [&::-webkit-slider-thumb]:bg-[#605e5c]"
      />
      <button aria-label="Zoom in" className="ml-2"><svg className="h-3 w-3" viewBox="0 0 12 12" stroke="#404040" strokeWidth="1.400"><path d="M0 6h12M6 0v12" /></svg></button>
      <span className="ml-5">100%</span>
    </footer>
  );
}

function Taskbar() {
  return (
    <div className="grid h-[70px] shrink-0 grid-cols-[1fr_auto_1fr] items-center bg-linear-to-r from-[#d7deee] via-[#d9d9ea] via-45% to-[#dad8ea] text-[17px] text-[#1f1f1f]">
      <span />
      <div className="flex items-center">
        <button aria-label="Start" className="mr-[22px]">
          <svg className="h-[35px] w-[35px]" viewBox="0 0 35 35">
            <defs><linearGradient id="win" x1="0" y1="0" x2="1" y2="1"><stop offset="0" stopColor="#4fd3ff" /><stop offset=".6" stopColor="#1186dd" /><stop offset="1" stopColor="#0072ce" /></linearGradient></defs>
            <path d="M1 0h16v17H0V1zM18 0h16l1 1v16H18zM0 18h17v17H1l-1-1zM18 18h17v16l-1 1H18z" fill="url(#win)" />
          </svg>
        </button>
        <label className="flex h-12 w-[327px] items-center gap-4 rounded-full border border-b-2 border-[#c4c4d6] bg-[#f4f4fa] pl-[15px]">
          <svg className="h-[22px] w-[22px] shrink-0" viewBox="0 0 22 22" fill="none" stroke="#262626" strokeWidth="2.200" strokeLinecap="round"><circle cx="10" cy="10" r="8.500" /><path d="M16 16l5 5" /></svg>
          <input aria-label="Taskbar search" placeholder="Search" className="w-full bg-transparent text-[19px] outline-none placeholder:text-[#5f5f66]" />
        </label>
        <button aria-label="Task view" className="ml-[18px]">
          <svg className="h-[34px] w-[38px]" viewBox="0 0 38 34">
            <rect x="1" y="10" width="27" height="24" rx="1" fill="#333" />
            <rect x="10" y="0" width="27" height="25" rx="1" fill="#f6f6f6" />
            <rect x="10" y="10" width="18" height="15" fill="#c3c3c3" />
          </svg>
        </button>
        <button aria-label="Teams" className="relative ml-7">
          <TeamsLogo className="h-[34px] w-9" />
          <svg className="absolute -right-2 -top-2.5 h-6 w-6" viewBox="0 0 24 24" fill="none"><circle cx="12" cy="12" r="12" fill="#13a10e" /><path d="M7 12l3.500 3.500L17 9" stroke="#fff" strokeWidth="2.600" /></svg>
        </button>
        <button aria-label="Outlook" className="relative ml-[21px] flex h-[58px] w-[51px] items-center justify-center rounded-md bg-[#ededf6] pl-1 shadow-[0_1px_2px_rgba(60,60,90,0.3),5px_0_0_#e4e3f0]">
          <OutlookLogo className="h-[34px] w-9" />
          <span className="absolute bottom-0 left-4 h-[5px] w-6 rounded-full bg-[#0078d7]" />
        </button>
        <button aria-label="File Explorer" className="ml-[25px]">
          <svg className="h-[34px] w-[37px]" viewBox="0 0 37 34">
            <path d="M0 2.500Q0 1 1.500 1H11l4 4v5H0z" fill="#e09c08" />
            <path d="M0 6h13l3-2h19.500Q37 4 37 5.500V33H0z" fill="#ffce4a" />
            <path d="M6 33v-7q0-3 3-3h19q3 0 3 3v7z" fill="#0f6fbf" /><path d="M12 28h13" stroke="#0a4a86" strokeWidth="2" />
          </svg>
        </button>
        <button aria-label="Edge" className="relative ml-[29px]">
          <svg className="h-9 w-[37px]" viewBox="0 0 37 36">
            <defs><linearGradient id="edge" x1="0" y1="0" x2="1" y2="0"><stop offset="0" stopColor="#1a9be0" /><stop offset=".5" stopColor="#2fc2d4" /><stop offset="1" stopColor="#63dc5c" /></linearGradient></defs>
            <path d="M1 18a17.500 17.500 0 0 0 18 18c7 0 12-3 15-8-8 3-18 0-18-9z" fill="#0f5aa8" />
            <path d="M0 18C1 7 9 0 19 0c11 0 18 8 18 16 0 7-5 10-10 10-4 0-4-2-3-4 1-4-1-8-6-8C11 14 7 20 8 28 3 26 0 22 0 18z" fill="url(#edge)" />
            <path d="M0 18c2-8 10-9 18-6-7 1-11 8-10 16-5-2-8-6-8-10z" fill="#0f7fd2" />
            <rect x="0" y="25" width="18" height="11" rx="1" fill="#c66a06" /><path d="M6 25v-2h6v2" stroke="#6b3700" strokeWidth="1.500" fill="none" />
            <path d="M0 30h18" stroke="#9a5000" /><rect x="7.500" y="29.500" width="3" height="3" fill="#ffd94f" />
          </svg>
          <span className="absolute -bottom-2.5 left-3.5 h-[5px] w-[9px] rounded-full bg-[#7d7d86]" />
        </button>
        <button aria-label="Microsoft Store" className="ml-[29px]">
          <svg className="h-9 w-9" viewBox="0 0 36 36">
            <defs><linearGradient id="store" x1="0" y1="0" x2="1" y2="1"><stop offset="0" stopColor="#0f6cbd" /><stop offset="1" stopColor="#253457" /></linearGradient></defs>
            <path d="M0 5h35v26q0 4-4 4H4q-4 0-4-4z" fill="url(#store)" />
            <path d="M9 7V2h17v5" fill="none" stroke="#35c5f4" strokeWidth="2" />
            <path d="M10 13h7v7h-7z" fill="#f25022" /><path d="M18 13h7v7h-7z" fill="#7fba00" />
            <path d="M10 21h7v7h-7z" fill="#00a4ef" /><path d="M18 21h7v7h-7z" fill="#ffb900" />
          </svg>
        </button>
      </div>
      <div className="flex items-center justify-end pb-0.5 pr-7">
        <button aria-label="Show hidden icons"><svg className="h-2.5 w-4" viewBox="0 0 16 10" fill="none" stroke="#262626" strokeWidth="1.800"><path d="M1 9l7-7 7 7" /></svg></button>
        <button aria-label="OneDrive" className="ml-7"><CloudLogo className="h-4 w-6" /></button>
        <button className="ml-[27px] flex flex-col items-center leading-[23px]"><span>ENG</span><span>IN</span></button>
        <button aria-label="Network, volume and battery" className="ml-7 flex items-center gap-3">
          <svg className="h-5 w-6" viewBox="0 0 24 20" fill="none" stroke="#262626" strokeWidth="1.800"><path d="M1 8a15.500 15.500 0 0 1 22 0M4.500 11.500a10.500 10.500 0 0 1 15 0M8 15a5.600 5.600 0 0 1 8 0" /><circle cx="12" cy="17.500" r="1.300" fill="#262626" /></svg>
          <svg className="h-5 w-6" viewBox="0 0 24 20" fill="none" stroke="#262626" strokeWidth="1.700"><path d="M1 7h4l5-5v16l-5-5H1zM13 7c1.500 2 1.500 4 0 6M16 4c3 4 3 8 0 12" /><path d="M19.500 1.500c4 5 4 12 0 17" stroke="#aaa" /></svg>
          <svg className="h-4 w-6" viewBox="0 0 24 16" fill="none" stroke="#262626" strokeWidth="1.700"><rect x="1" y="1" width="19.500" height="14" rx="3.500" /><rect x="4" y="4" width="13.500" height="8" rx="1" fill="#1a1a1a" stroke="none" /><path d="M22.500 6v4" strokeWidth="3" /></svg>
        </button>
        <button className="ml-7 flex flex-col items-end leading-6"><span>2:21 PM</span><span>6/1/2025</span></button>
      </div>
    </div>
  );
}

export default function App() {
  return (
    <div className="flex h-screen flex-col overflow-hidden bg-[#e5e5eb] font-['Open_Sans','Noto_Sans',sans-serif]">
      <TitleBar />
      <div className="flex min-h-0 flex-1">
        <AppRail />
        <div className="flex min-w-0 flex-1 flex-col">
          <Tabs />
          <Ribbon />
          <main className="mr-3 mt-[9px] flex min-h-0 flex-1 overflow-hidden rounded-t-[10px] border border-b-0 border-[#d0d0d4] bg-white">
            <FolderStrip />
            <MessageList />
            <ReadingPane />
          </main>
        </div>
      </div>
      <StatusBar />
      <Taskbar />
    </div>
  );
}
